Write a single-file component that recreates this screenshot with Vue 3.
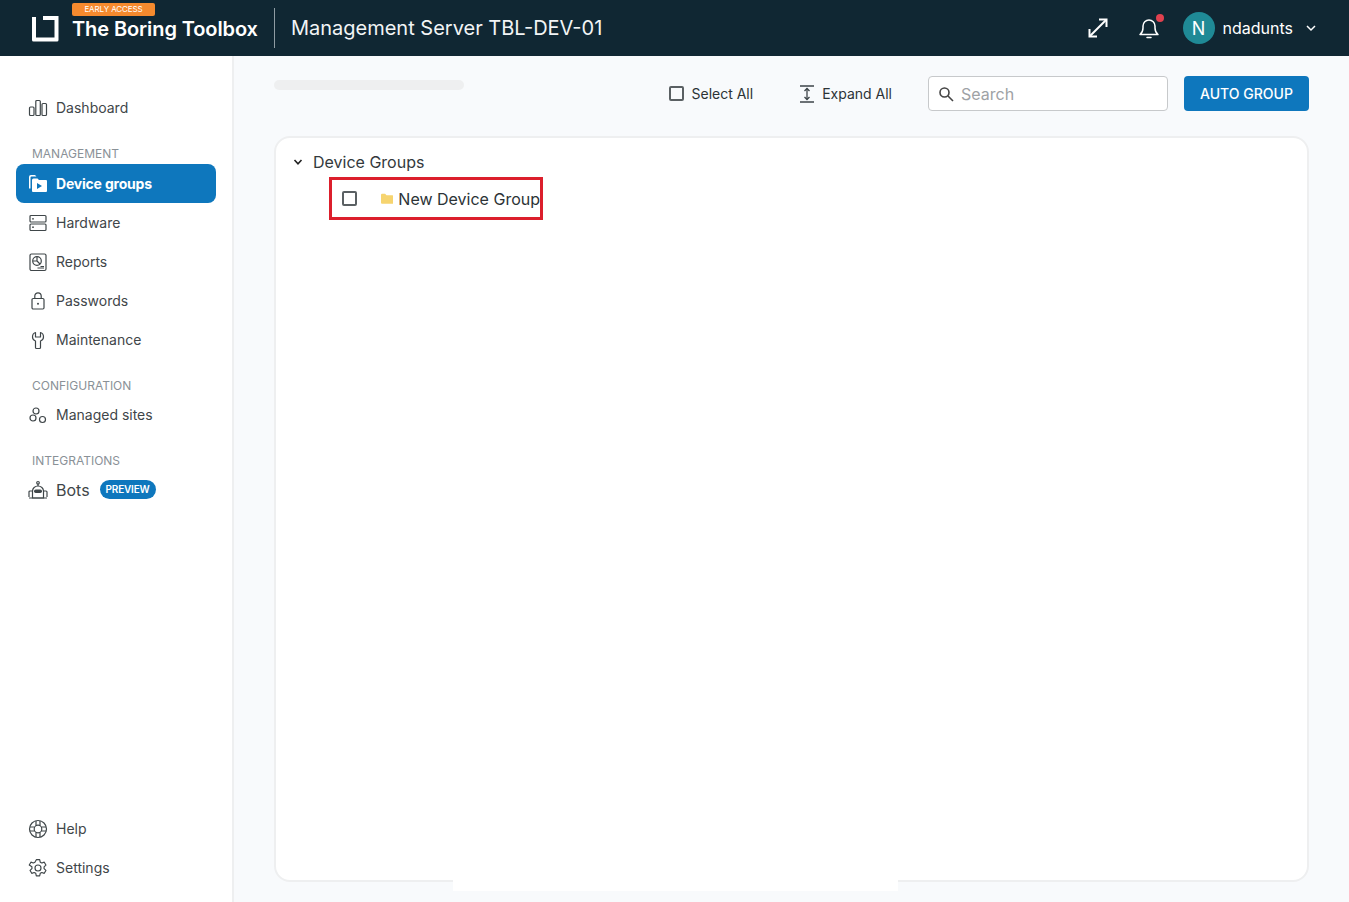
<template>
  <div class="app">
    <header class="topbar">
      <div class="brand">
        <svg class="logo" width="32" height="32" viewBox="0 0 32 32" fill="none">
          <path d="M3 5 V28 a1.5 1.5 0 0 0 1.5 1.5 H28 a1.5 1.5 0 0 0 1.5 -1.5 V4 H14 V8 H25.5 V25.5 H7 V5 Z" fill="#fff" />
        </svg>
        <div class="brand-text">
          <span class="early">EARLY ACCESS</span>
          <span class="brand-name">The Boring Toolbox</span>
        </div>
      </div>
      <div class="divider"></div>
      <div class="server">Management Server TBL-DEV-01</div>
      <div class="top-actions">
        <svg class="expand" width="22" height="22" viewBox="0 0 22 22" fill="none" stroke="#fff" stroke-width="2">
          <path d="M3 19 L19 3" />
          <path d="M12 2.5 H19.5 V10" fill="none" />
          <path d="M2.5 12 V19.5 H10" fill="none" />
        </svg>
        <div class="bell">
          <svg width="24" height="24" viewBox="0 0 24 24" fill="none" stroke="#fff" stroke-width="1.5" stroke-linejoin="round" stroke-linecap="round">
            <path d="M3 18.5 c2 -1.5 3 -3.5 3 -6.5 v-2 a6 6 0 0 1 12 0 v2 c0 3 1 5 3 6.5 Z" />
            <path d="M10 21.5 h4" />
          </svg>
          <span class="dot"></span>
        </div>
        <div class="user">
          <span class="avatar">N</span>
          <span class="username">ndadunts</span>
          <svg width="12" height="12" viewBox="0 0 12 12" fill="none" stroke="#fff" stroke-width="1.5">
            <path d="M2 4 L6 8 L10 4" />
          </svg>
        </div>
      </div>
    </header>

    <div class="body">
      <aside class="sidebar">
        <nav class="nav-top">
          <a class="item">
            <svg class="icon" viewBox="0 0 20 20" fill="none" stroke="currentColor" stroke-width="1.2">
              <rect x="1.5" y="9" width="4.5" height="8.5" rx="1" />
              <rect x="7.8" y="2.5" width="4.5" height="15" rx="1" />
              <rect x="14" y="5.5" width="4.5" height="12" rx="1" />
            </svg>
            Dashboard
          </a>

          <div class="label first">MANAGEMENT</div>
          <a class="item active">
            <svg class="icon" viewBox="0 0 20 20" fill="#fff">
              <path d="M1 3 a2 2 0 0 1 2 -2 h4 l1.5 1.5 h-5 a1 1 0 0 0 -1 1 v11 h-1.5 Z" />
              <path fill-rule="evenodd" d="M4 6 a1.5 1.5 0 0 1 1.5 -1.5 h4 l1.5 1.5 h7 a1 1 0 0 1 1 1 v10 a1 1 0 0 1 -1 1 h-13 a1 1 0 0 1 -1 -1 Z M9 9 v6 l5 -3 Z" />
            </svg>
            Device groups
          </a>
          <a class="item">
            <svg class="icon" viewBox="0 0 20 20" fill="none" stroke="currentColor" stroke-width="1.2">
              <rect x="2" y="2.5" width="16" height="6.5" rx="1" />
              <rect x="2" y="11" width="16" height="6.5" rx="1" />
              <circle cx="5" cy="5.8" r="0.9" fill="currentColor" stroke="none" />
              <circle cx="5" cy="14.2" r="0.9" fill="currentColor" stroke="none" />
            </svg>
            Hardware
          </a>
          <a class="item">
            <svg class="icon" viewBox="0 0 20 20" fill="none" stroke="currentColor" stroke-width="1.2">
              <rect x="2" y="2" width="16" height="16.5" rx="1.5" />
              <circle cx="9" cy="9" r="4.3" />
              <path d="M9 4.7 V9 L5 9 M9 9 L12 12" />
              <path d="M12.5 14.5 H16 M9.5 16 H16" />
            </svg>
            Reports
          </a>
          <a class="item">
            <svg class="icon" viewBox="0 0 20 20" fill="none" stroke="currentColor" stroke-width="1.2">
              <rect x="4" y="7.5" width="12" height="10.5" rx="1.2" />
              <path d="M6.8 7.5 V5 a3.2 3.2 0 0 1 6.4 0 V7.5" />
              <circle cx="10" cy="12.8" r="1" fill="currentColor" stroke="none" />
            </svg>
            Passwords
          </a>
          <a class="item">
            <svg class="icon" viewBox="0 0 20 20" fill="none" stroke="currentColor" stroke-width="1.2" stroke-linejoin="round">
              <path d="M7.5 2.5 C5.5 3 4.5 5 4.5 7 C4.5 9.2 6 10.5 7.5 11 V17.5 a1 1 0 0 0 1 1 h3 a1 1 0 0 0 1 -1 V11 C14 10.5 15.5 9.2 15.5 7 C15.5 5 14.5 3 12.5 2.5 V7 H7.5 Z" />
            </svg>
            Maintenance
          </a>

          <div class="label">CONFIGURATION</div>
          <a class="item">
            <svg class="icon" viewBox="0 0 20 20" fill="none" stroke="currentColor" stroke-width="1.2">
              <circle cx="8" cy="6" r="3" />
              <circle cx="5" cy="13" r="3" />
              <circle cx="14.5" cy="14.5" r="3" />
            </svg>
            Managed sites
          </a>

          <div class="label">INTEGRATIONS</div>
          <a class="item bots">
            <svg class="icon" viewBox="0 0 20 20" fill="none" stroke="currentColor" stroke-width="1.2">
              <circle cx="10" cy="2.8" r="1.3" />
              <path d="M10 4 V6" />
              <path d="M4.5 18 V11 a5.5 5 0 0 1 11 0 V18 Z" />
              <rect x="6" y="9.5" width="8" height="3.5" rx="1.7" fill="currentColor" stroke="none" />
              <path d="M4.5 11 H2 a1 1 0 0 0 -1 1 V17 M15.5 11 H18 a1 1 0 0 1 1 1 V17 M1 18 H19" />
            </svg>
            <span class="bots-name">Bots</span>
            <span class="preview">PREVIEW</span>
          </a>
        </nav>

        <nav class="nav-bottom">
          <a class="item">
            <svg class="icon" viewBox="0 0 20 20" fill="none" stroke="currentColor" stroke-width="1.2">
              <circle cx="10" cy="10" r="8.5" />
              <circle cx="10" cy="10" r="3.8" />
              <path d="M8 1.8 V6.7 M12 1.8 V6.7 M8 13.3 V18.2 M12 13.3 V18.2 M1.8 8 H6.7 M1.8 12 H6.7 M13.3 8 H18.2 M13.3 12 H18.2" />
            </svg>
            Help
          </a>
          <a class="item">
            <svg class="icon" viewBox="0 0 24 24" fill="none" stroke="currentColor" stroke-width="1.4" stroke-linejoin="round">
              <path d="M10 2 h4 l.7 3 1.9 1 2.9 -1 2 3.5 -2.2 2.1 v2.2 l2.2 2.1 -2 3.5 -2.9 -1 -1.9 1 -.7 3 h-4 l-.7 -3 -1.9 -1 -2.9 1 -2 -3.5 2.2 -2.1 v-2.2 L1.5 8.5 l2 -3.5 2.9 1 1.9 -1 Z" />
              <circle cx="12" cy="12" r="3.6" />
            </svg>
            Settings
          </a>
        </nav>
      </aside>

      <main class="main">
        <div class="toolbar">
          <div class="skeleton"></div>
          <div class="tools">
            <div class="tool select-all">
              <span class="check"></span>
              Select All
            </div>
            <div class="tool expand-all">
              <svg width="16" height="20" viewBox="0 0 16 20" fill="none" stroke="#3c4448" stroke-width="1.3">
                <path d="M1 2 H15 M1 18 H15 M8 4.5 V15.5" />
                <path d="M5.5 7 L8 4.5 L10.5 7 M5.5 13 L8 15.5 L10.5 13" />
              </svg>
              Expand All
            </div>
            <div class="search">
              <svg width="16" height="16" viewBox="0 0 16 16" fill="none" stroke="#444" stroke-width="1.6">
                <circle cx="6.5" cy="6.5" r="4.5" />
                <path d="M10 10 L15 15" />
              </svg>
              <span>Search</span>
            </div>
            <button class="auto">AUTO GROUP</button>
          </div>
        </div>

        <section class="card">
          <div class="tree-head">
            <svg width="10" height="10" viewBox="0 0 10 10" fill="none" stroke="#222" stroke-width="1.6">
              <path d="M1.5 3 L5 6.8 L8.5 3" />
            </svg>
            Device Groups
          </div>
          <div class="tree-node">
            <span class="check node-check"></span>
            <svg width="18" height="16" viewBox="0 0 18 16">
              <path d="M0 2 a1.5 1.5 0 0 1 1.5 -1.5 h4.5 l2 2 h8.5 a1.5 1.5 0 0 1 1.5 1.5 v9.5 a1.5 1.5 0 0 1 -1.5 1.5 h-15 a1.5 1.5 0 0 1 -1.5 -1.5 Z" fill="#f6d46f" />
            </svg>
            <span class="node-name">New Device Group</span>
          </div>
        </section>
        <div class="patch"></div>
      </main>
    </div>
  </div>
</template>

<script setup>
</script>

<style>
html,
body {
  margin: 0;
  overflow: hidden;
}
</style>

<style scoped>
.app {
  width: 1349px;
  height: 902px;
  display: flex;
  flex-direction: column;
  font-family: Inter, "Liberation Sans", sans-serif;
  color: #3f4649;
  background: #f8fafc;
}

/* Top bar */
.topbar {
  height: 56px;
  flex: none;
  display: flex;
  align-items: center;
  padding: 0 32px 0 29px;
  background: #102733;
  color: #fff;
}

.brand {
  display: flex;
  align-items: center;
  gap: 11px;
}

.logo {
  margin-top: 0;
}

.brand-text {
  display: flex;
  flex-direction: column;
  align-items: flex-start;
  height: 56px;
  position: relative;
  justify-content: flex-end;
}

.early {
  position: absolute;
  top: 3px;
  left: 0;
  width: 83px;
  height: 13px;
  line-height: 13px;
  text-align: center;
  border-radius: 2px;
  background: #f58a2e;
  font-size: 8px;
  letter-spacing: -0.1px;
}

.brand-name {
  margin-bottom: 15px;
  font-size: 20px;
  font-weight: 600;
  line-height: 24px;
  letter-spacing: -0.1px;
  white-space: nowrap;
}

.divider {
  width: 1px;
  height: 40px;
  margin: 0 16px;
  background: #8f9ca3;
}

.server {
  font-size: 20px;
  line-height: 24px;
  white-space: nowrap;
  color: #f2f4f5;
}

.top-actions {
  margin-left: auto;
  display: flex;
  align-items: center;
}

.expand {
  margin-right: 28px;
}

.bell {
  position: relative;
  width: 24px;
  height: 24px;
  margin-right: 22px;
}

.dot {
  position: absolute;
  top: -2px;
  right: -3px;
  width: 8px;
  height: 8px;
  border-radius: 50%;
  background: #e0414f;
}

.user {
  display: flex;
  align-items: center;
}

.avatar {
  width: 32px;
  height: 32px;
  border-radius: 50%;
  background: #1f8a96;
  display: flex;
  align-items: center;
  justify-content: center;
  font-size: 18px;
}

.username {
  margin: 0 12px 0 8px;
  font-size: 16px;
}

/* Sidebar */
.body {
  flex: 1;
  display: flex;
  min-height: 0;
}

.sidebar {
  width: 232px;
  flex: none;
  box-sizing: content-box;
  display: flex;
  flex-direction: column;
  justify-content: space-between;
  padding: 32px 0 15px;
  background: #fff;
  border-right: 2px solid #eeeff0;
}

.item {
  height: 39px;
  margin: 0 16px;
  padding: 0 12px;
  width: 200px;
  box-sizing: border-box;
  display: flex;
  align-items: center;
  gap: 8px;
  font-size: 14px;
  border-radius: 8px;
  white-space: nowrap;
}

.icon {
  width: 20px;
  height: 20px;
  flex: none;
}

.item.active {
  background: #0e77bd;
  color: #fff;
  font-weight: 700;
  letter-spacing: -0.2px;
}

.label {
  margin: 26px 0 0 32px;
  height: 19px;
  line-height: 19px;
  font-size: 12px;
  color: #8a9197;
}

.label.first {
  margin-top: 17px;
  margin-bottom: 1px;
}

.label:not(.first) {
  margin-top: 17px;
}

.label + .item {
  margin-top: 0;
}

.bots-name {
  font-size: 16px;
}

.preview {
  margin-left: 2px;
  height: 19px;
  line-height: 19px;
  padding: 0 6px;
  border-radius: 10px;
  background: #0e77bd;
  color: #fff;
  font-size: 10px;
  font-weight: 600;
  letter-spacing: -0.2px;
}

/* Main */
.main {
  flex: 1;
  min-width: 0;
  position: relative;
  display: flex;
  flex-direction: column;
  padding: 20px 40px 20px 40px;
  background: #f8fafc;
}

.toolbar {
  height: 35px;
  flex: none;
  display: flex;
  justify-content: space-between;
}

.skeleton {
  width: 190px;
  height: 10px;
  margin-top: 4px;
  border-radius: 5px;
  background: #eeeff0;
}

.tools {
  display: flex;
  align-items: center;
  font-size: 14px;
  color: #2c3336;
}

.tool {
  display: flex;
  align-items: center;
  white-space: nowrap;
}

.select-all {
  gap: 7px;
  margin-right: 46px;
}

.expand-all {
  gap: 7px;
  margin-right: 36px;
}

.check {
  width: 11px;
  height: 11px;
  display: inline-block;
  border: 2px solid #5a6063;
  border-radius: 2px;
  flex: none;
}

.search {
  width: 240px;
  height: 35px;
  box-sizing: border-box;
  display: flex;
  align-items: center;
  gap: 7px;
  padding: 0 9px;
  margin-right: 16px;
  background: #fff;
  border: 1px solid #c7c9cb;
  border-radius: 4px;
  font-size: 16px;
  color: #9ea2a5;
}

.auto {
  width: 125px;
  height: 35px;
  border: none;
  border-radius: 4px;
  background: #0e77bd;
  color: #fff;
  font-family: inherit;
  font-size: 14px;
  font-weight: 500;
  padding: 0;
}

.card {
  flex: 1;
  margin-top: 25px;
  padding: 12px 0 0 17px;
  background: #fff;
  border: 2px solid #eeeff0;
  border-radius: 16px;
}

.tree-head {
  height: 24px;
  display: flex;
  align-items: center;
  gap: 10px;
  font-size: 16px;
  color: #33393c;
}

.tree-node {
  width: 214px;
  height: 43px;
  box-sizing: border-box;
  margin: 3px 0 0 36px;
  border: 3px solid #dc1f2c;
  display: flex;
  align-items: center;
  padding-left: 10px;
  font-size: 16px;
  color: #2c3336;
}

.node-check {
  margin-right: 24px;
}

.node-name {
  margin-left: 5px;
  white-space: nowrap;
}

.patch {
  position: absolute;
  left: 219px;
  top: 780px;
  width: 445px;
  height: 55px;
  background: #fff;
}
</style>
